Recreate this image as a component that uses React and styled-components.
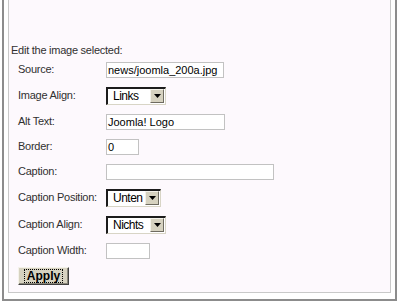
import React from 'react';
import styled, { createGlobalStyle } from 'styled-components';

const GlobalStyle = createGlobalStyle`
  html, body {
    margin:0;
    padding:0;
    background:#fff;
  }
  body {
    font-family:"Liberation Sans", Arial, sans-serif;
    font-size:11px;
    letter-spacing:-0.25px;
    color:#303030;
  }
`;

const Frame = styled.div`
  margin-left:2px;
  width:395px;
  box-sizing:border-box;
  border:2px solid #8c8c8c;
  border-top:none;
  padding:0 4px 6px 4px;
`;

const Panel = styled.div`
  box-sizing:border-box;
  background:#fdf9fd;
  border:1px solid #c9c9c9;
  border-top:none;
  padding:44px 2px 4px 2px;
`;

const Heading = styled.div`
  height:13px;
  line-height:13px;
`;

const Form = styled.div`
  margin-left:7px;
`;

const Row = styled.div`
  display:flex;
  align-items:center;
  height:${props => (props.$tall ? 27 : 25)}px;
`;

const Label = styled.div`
  width:88px;
  flex:none;
  line-height:13px;
`;

const TextBox = styled.div`
  box-sizing:border-box;
  width:${props => props.$w}px;
  height:16px;
  border:1px solid #c2c2c2;
  background:#fff;
  padding:0 1px;
  font-size:11px;
  letter-spacing:0;
  line-height:14px;
  color:#000;
  white-space:nowrap;
  overflow:hidden;
`;

const SelectBox = styled.div`
  box-sizing:border-box;
  display:flex;
  align-items:center;
  width:${props => props.$w}px;
  height:18px;
  border-style:solid;
  border-width:2px 1px 1px 2px;
  border-color:#1c1c1c #d8d5c6 #d8d5c6 #1c1c1c;
  background:#fff;
  padding-left:5px;
  padding-right:1px;
`;

const SelectText = styled.span`
  flex:1;
  font-size:12px;
  letter-spacing:-0.5px;
  line-height:14px;
  color:#000;
`;

const ArrowButton = styled.span`
  box-sizing:border-box;
  display:flex;
  align-items:center;
  justify-content:center;
  width:14px;
  height:14px;
  background:#d6d2c0;
  border:1px solid;
  border-color:#f4f2ea #6e6b60 #6e6b60 #f4f2ea;
`;

const ApplyRow = styled.div`
  display:flex;
  align-items:center;
  height:25px;
`;

const ApplyButton = styled.button`
  box-sizing:border-box;
  width:51px;
  height:18px;
  padding:0;
  display:flex;
  align-items:center;
  justify-content:center;
  background:#d6d2c0;
  border:1px solid;
  border-color:#f4f2ea #404040 #404040 #f4f2ea;
  box-shadow:inset -1px -1px 0 #8a877a;
  font-family:"Liberation Sans", Arial, sans-serif;
  font-weight:bold;
  font-size:12px;
  color:#000;
`;

const FocusRing = styled.span`
  border:1px dotted #000;
  padding:0 2px;
  line-height:12px;
`;

function Select({ value, width }) {
  return (
    <SelectBox $w={width}>
      <SelectText>{value}</SelectText>
      <ArrowButton>
        <svg width="7" height="4" viewBox="0 0 7 4">
          <path d="M0 0h7L3.5 4z" fill="#000" />
        </svg>
      </ArrowButton>
    </SelectBox>
  );
}

export default function App() {
  return (
    <>
      <GlobalStyle />
      <Frame>
        <Panel>
          <Heading>Edit the image selected:</Heading>
          <Form>
            <Row>
              <Label>Source:</Label>
              <TextBox $w={118}>news/joomla_200a.jpg</TextBox>
            </Row>
            <Row $tall>
              <Label>Image Align:</Label>
              <Select value="Links" width={60} />
            </Row>
            <Row>
              <Label>Alt Text:</Label>
              <TextBox $w={119}>Joomla! Logo</TextBox>
            </Row>
            <Row>
              <Label>Border:</Label>
              <TextBox $w={33}>0</TextBox>
            </Row>
            <Row>
              <Label>Caption:</Label>
              <TextBox $w={168} />
            </Row>
            <Row $tall>
              <Label>Caption Position:</Label>
              <Select value="Unten" width={55} />
            </Row>
            <Row $tall>
              <Label>Caption Align:</Label>
              <Select value="Nichts" width={60} />
            </Row>
            <Row>
              <Label>Caption Width:</Label>
              <TextBox $w={44} />
            </Row>
            <ApplyRow>
              <ApplyButton>
                <FocusRing>Apply</FocusRing>
              </ApplyButton>
            </ApplyRow>
          </Form>
        </Panel>
      </Frame>
    </>
  );
}
